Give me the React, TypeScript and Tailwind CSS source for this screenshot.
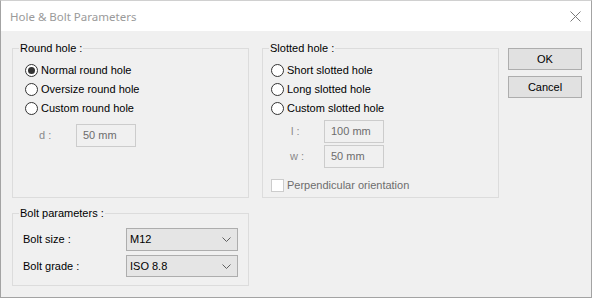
import { useState } from "react";

const font = { fontFamily: '"Liberation Sans", Arial, sans-serif' };

const Radio = ({
  label,
  checked,
  onClick,
}: {
  label: string;
  checked: boolean;
  onClick: () => void;
}) => (
  <div className="flex h-[19px] items-center cursor-default" onClick={onClick}>
    <div className="flex h-[13px] w-[13px] items-center justify-center rounded-full border border-[#333333] bg-white">
      {checked && <div className="h-[7px] w-[7px] rounded-full bg-[#333333]" />}
    </div>
    <span className="ml-[3px] text-[11px] text-black">{label}</span>
  </div>
);

const Chevron = () => (
  <svg width="9" height="5" viewBox="0 0 9 5" className="ml-auto mr-[6px]">
    <path d="M0.5 0.5 L4.5 4.5 L8.5 0.5" fill="none" stroke="#5f5f5f" strokeWidth="1" />
  </svg>
);

const App = () => {
  const [roundHole, setRoundHole] = useState("normal");
  const [slottedHole, setSlottedHole] = useState("");

  return (
    <div className="h-[299px] w-[593px] bg-white" style={font}>
      <div className="flex h-[298px] w-[592px] flex-col border border-[#a3a3a3] border-t-[#d0d0d0]">
        {/* title bar */}
        <div className="flex h-[30px] items-center bg-white pl-[9px] pt-[1px]">
          <span
            className="text-[11.5px] text-[#9a9a9a]"
            style={{ fontFamily: '"Noto Sans", "Open Sans", sans-serif' }}
          >
            Hole &amp; Bolt Parameters
          </span>
          <svg width="11" height="11" viewBox="0 0 11 11" className="ml-auto mr-[10px]">
            <path d="M0.5 0.5 L10.5 10.5 M10.5 0.5 L0.5 10.5" stroke="#7a7a7a" strokeWidth="1" />
          </svg>
        </div>

        {/* body */}
        <div className="flex flex-1 bg-[#f0f0f0] pl-[11px] pt-[11px]">
          <div className="flex w-[237px] flex-col gap-[9px]">
            <fieldset className="h-[156px] border border-[#dcdcdc] pl-[12px] pt-[6px]">
              <legend className="-ml-[6px] px-[1px] text-[11px] leading-[13px] text-black">
                Round hole :
              </legend>
              <Radio label="Normal round hole" checked={roundHole === "normal"} onClick={() => setRoundHole("normal")} />
              <Radio label="Oversize round hole" checked={roundHole === "oversize"} onClick={() => setRoundHole("oversize")} />
              <Radio label="Custom round hole" checked={roundHole === "custom"} onClick={() => setRoundHole("custom")} />
              <div className="mt-[6px] flex items-center">
                <span className="w-[51px] pl-[14px] text-[11px] text-[#8a8a8a]">d :</span>
                <div className="flex h-[23px] w-[60px] items-center border border-[#cccccc] pl-[6px] text-[11px] text-[#6d6d6d]">
                  50 mm
                </div>
              </div>
            </fieldset>

            <fieldset className="h-[79px] border border-[#dcdcdc] pl-[10px]">
              <legend className="-ml-[4px] px-[1px] text-[11px] leading-[13px] text-black">
                Bolt parameters :
              </legend>
              <div className="mt-[8px] flex items-center">
                <span className="w-[103px] text-[11px] text-black">Bolt size :</span>
                <div className="flex h-[23px] w-[112px] items-center border border-[#adadad] bg-[#e5e5e5] pl-[3px] text-[11px] text-black">
                  M12
                  <Chevron />
                </div>
              </div>
              <div className="mt-[4px] flex items-center">
                <span className="w-[103px] text-[11px] text-black">Bolt grade :</span>
                <div className="flex h-[22px] w-[112px] items-center border border-[#adadad] bg-[#e5e5e5] pl-[3px] text-[11px] text-black">
                  ISO 8.8
                  <Chevron />
                </div>
              </div>
            </fieldset>
          </div>

          <fieldset className="ml-[13px] h-[156px] w-[237px] border border-[#dcdcdc] pl-[8px] pt-[6px]">
            <legend className="-ml-[2px] px-[1px] text-[11px] leading-[13px] text-black">
              Slotted hole :
            </legend>
            <Radio label="Short slotted hole" checked={slottedHole === "short"} onClick={() => setSlottedHole("short")} />
            <Radio label="Long slotted hole" checked={slottedHole === "long"} onClick={() => setSlottedHole("long")} />
            <Radio label="Custom slotted hole" checked={slottedHole === "custom"} onClick={() => setSlottedHole("custom")} />
            <div className="mt-[2px] flex items-center">
              <span className="w-[53px] pl-[20px] text-[11px] text-[#8a8a8a]">l :</span>
              <div className="flex h-[23px] w-[60px] items-center border border-[#cccccc] pl-[6px] text-[11px] text-[#6d6d6d]">
                100 mm
              </div>
            </div>
            <div className="mt-[2px] flex items-center">
              <span className="w-[53px] pl-[19px] text-[11px] text-[#8a8a8a]">w :</span>
              <div className="flex h-[23px] w-[60px] items-center border border-[#cccccc] pl-[6px] text-[11px] text-[#6d6d6d]">
                50 mm
              </div>
            </div>
            <div className="mt-[9px] flex items-center">
              <div className="h-[13px] w-[13px] border border-[#cccccc] bg-white" />
              <span className="ml-[3px] text-[11px] text-[#6d6d6d]">Perpendicular orientation</span>
            </div>
          </fieldset>

          <div className="ml-[9px] flex flex-col gap-[6px] pt-[6px]">
            <button className="h-[22px] w-[74px] border border-[#adadad] bg-[#e1e1e1] text-[11px] text-black">
              OK
            </button>
            <button className="h-[22px] w-[74px] border border-[#adadad] bg-[#e1e1e1] text-[11px] text-black">
              Cancel
            </button>
          </div>
        </div>
      </div>
    </div>
  );
};

export default App;
